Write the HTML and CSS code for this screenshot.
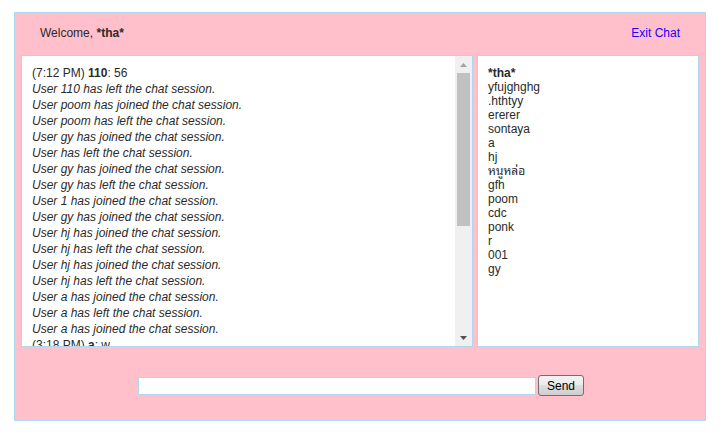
FILE: index.html
```html
<!DOCTYPE html>
<html lang="en">
<head>
<meta charset="utf-8">
<title>Chat</title>
<link rel="stylesheet" href="styles.css">
</head>
<body>
<div class="wrapper">
  <div class="menu">
    <p class="welcome">Welcome, <b>*tha*</b></p>
    <a class="logout" href="#">Exit Chat</a>
  </div>
  <div class="panels">
    <div class="chatbox">
      <div class="messages">
        <div class="msgln">(7:12 PM) <b>110</b>: 56</div>
        <div class="msgln"><i>User 110 has left the chat session.</i></div>
        <div class="msgln"><i>User poom has joined the chat session.</i></div>
        <div class="msgln"><i>User poom has left the chat session.</i></div>
        <div class="msgln"><i>User gy has joined the chat session.</i></div>
        <div class="msgln"><i>User  has left the chat session.</i></div>
        <div class="msgln"><i>User gy has joined the chat session.</i></div>
        <div class="msgln"><i>User gy has left the chat session.</i></div>
        <div class="msgln"><i>User 1 has joined the chat session.</i></div>
        <div class="msgln"><i>User gy has joined the chat session.</i></div>
        <div class="msgln"><i>User hj has joined the chat session.</i></div>
        <div class="msgln"><i>User hj has left the chat session.</i></div>
        <div class="msgln"><i>User hj has joined the chat session.</i></div>
        <div class="msgln"><i>User hj has left the chat session.</i></div>
        <div class="msgln"><i>User a has joined the chat session.</i></div>
        <div class="msgln"><i>User a has left the chat session.</i></div>
        <div class="msgln"><i>User a has joined the chat session.</i></div>
        <div class="msgln">(3:18 PM) <b>a</b>: w</div>
      </div>
      <div class="scrollbar" aria-hidden="true">
        <div class="sb-btn">
          <svg width="7" height="4" viewBox="0 0 7 4"><path d="M3.5 0L7 4H0z" fill="#a3a3a3"/></svg>
        </div>
        <div class="sb-track">
          <div class="sb-thumb"></div>
        </div>
        <div class="sb-btn">
          <svg width="7" height="4" viewBox="0 0 7 4"><path d="M0 0H7L3.5 4z" fill="#505050"/></svg>
        </div>
      </div>
    </div>
    <ul class="userlist">
      <li><b>*tha*</b></li>
      <li>yfujghghg</li>
      <li>.hthtyy</li>
      <li>ererer</li>
      <li>sontaya</li>
      <li>a</li>
      <li>hj</li>
      <li>หนูหล่อ</li>
      <li>gfh</li>
      <li>poom</li>
      <li>cdc</li>
      <li>ponk</li>
      <li>r</li>
      <li>001</li>
      <li>gy</li>
    </ul>
  </div>
  <form class="sendform" action="#">
    <input class="usermsg" type="text" name="usermsg">
    <button class="submitmsg" type="button">Send</button>
  </form>
</div>
</body>
</html>
```

FILE: styles.css
```css
html, body {
  margin: 0;
  padding: 0;
  background: #ffffff;
}

body {
  font: 12px "Liberation Sans", Arial, "Noto Sans Thai Looped", "Noto Looped Thai UI", "Loma", "Garuda", "Waree", "Tahoma", "Noto Sans Thai", "DejaVu Sans", sans-serif;
  color: #2a2a2a;
}

.wrapper {
  margin: 12px 0 0 14px;
  width: 690px;
  background: #ffc0cb;
  border: 1px solid #acd8f0;
  padding-bottom: 24px;
}

.menu {
  display: flex;
  justify-content: space-between;
  align-items: baseline;
  padding: 13px 25px 12px;
  line-height: 14px;
}

.welcome {
  margin: 0;
}

.logout {
  color: #2200ff;
  text-decoration: none;
}

.panels {
  display: flex;
  justify-content: center;
  gap: 4px;
  margin-top: 3px;
}

.chatbox {
  display: flex;
  width: 450px;
  height: 290px;
  background: #ffffff;
  border: 1px solid #acd8f0;
}

.messages {
  flex: 1;
  padding: 10px 0 0 10px;
  overflow: hidden;
}

.msgln {
  line-height: 14px;
  margin: 0 0 2px 0;
  white-space: nowrap;
}

.scrollbar {
  display: flex;
  flex-direction: column;
  width: 17px;
  background: #f0f0f0;
}

.sb-btn {
  display: flex;
  align-items: center;
  justify-content: center;
  height: 17px;
}

.sb-btn svg {
  display: block;
}

.sb-track {
  flex: 1;
  padding: 0 2px;
}

.sb-thumb {
  height: 153px;
  background: #c1c1c1;
}

.userlist {
  list-style: none;
  margin: 0;
  width: 200px;
  height: 270px;
  padding: 10px;
  background: #ffffff;
  border: 1px solid #acd8f0;
  line-height: 14px;
}

.userlist li {
  height: 14px;
}

.sendform {
  display: flex;
  justify-content: center;
  align-items: center;
  gap: 2px;
  margin: 28px 0 0 2px;
}

.usermsg {
  box-sizing: border-box;
  width: 398px;
  height: 18px;
  margin: 0;
  padding: 1px 2px;
  border: 1px solid #acd8f0;
  background: #ffffff;
  font: 12px "Liberation Sans", Arial, sans-serif;
}

.submitmsg {
  box-sizing: border-box;
  width: 46px;
  height: 21px;
  margin: 0;
  padding: 0;
  border: 1px solid #707070;
  border-radius: 3px;
  background: linear-gradient(#f2f2f2 0%, #ebebeb 50%, #dddddd 50%, #cfcfcf 100%);
  color: #000000;
  font: 12px "Liberation Sans", Arial, sans-serif;
}
```
